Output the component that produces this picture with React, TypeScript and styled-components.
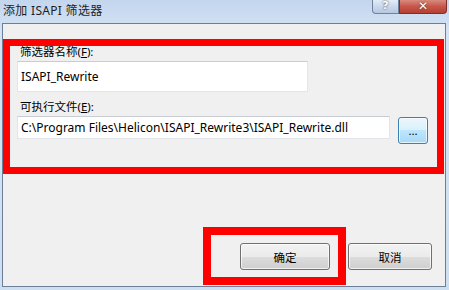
import React from "react";
import styled, { createGlobalStyle } from "styled-components";

const Global = createGlobalStyle`
  html, body { margin: 0; padding: 0; background: #cddcef; }
  body { font-family: "Noto Sans", "Noto Sans CJK SC", sans-serif; }
`;

const Window = styled.div`
  position: relative;
  width: 449px;
  height: 290px;
  background: linear-gradient(#c3d6ee, #d4e3f5 30px, #cfdff2);
  display: flex;
  flex-direction: column;
  overflow: hidden;
  font-family: "Noto Sans", "Noto Sans CJK SC", sans-serif;
`;

const TitleBar = styled.div`
  height: 23px;
  display: flex;
  justify-content: space-between;
  align-items: flex-start;
  padding: 0 2px 0 3px;
  flex-shrink: 0;
`;

const Title = styled.div`
  font-size: 12px;
  line-height: 13px;
  margin-top: 4px;
  color: #1e1e1e;
  letter-spacing: 0.3px;
`;

const Caption = styled.div`
  display: flex;
`;

const CapBtn = styled.div<{ $close?: boolean }>`
  width: ${(p) => (p.$close ? 48 : 27)}px;
  height: 14px;
  box-sizing: border-box;
  border: 1px solid ${(p) => (p.$close ? "#7d2f28" : "#6f839c")};
  border-top: none;
  border-radius: 0 0 ${(p) => (p.$close ? "4px 0" : "0 4px")};
  background: ${(p) =>
    p.$close
      ? "linear-gradient(#d98a7e, #c6574a 50%, #b63f31)"
      : "linear-gradient(#e3ecf7, #c9d8ec 50%, #b6c8e0)"};
  color: #fff;
  font-family: "DejaVu Sans", sans-serif;
  font-weight: bold;
  font-size: ${(p) => (p.$close ? 12 : 11)}px;
  line-height: 12px;
  text-align: center;
  text-shadow: 0 0 2px #333;
`;

const Panel = styled.div`
  flex: 1;
  margin: 0 3px 3px 2px;
  border: 1px solid #6d7f96;
  background: #f0f0f0;
  display: flex;
  flex-direction: column;
  padding: 20px 13px 16px 14px;
`;

const Label = styled.div`
  font-size: 11.5px;
  line-height: 16px;
  height: 16px;
  color: #000;
  padding-left: 3px;
  font-family: "Noto Sans", "Noto Sans CJK SC", sans-serif;
  & u { text-decoration: underline; }
`;

const TextBox = styled.div<{ $w: number; $h: number }>`
  width: ${(p) => p.$w}px;
  height: ${(p) => p.$h}px;
  box-sizing: border-box;
  background: #fff;
  border: 1px solid #e2e5ea;
  border-top-color: #c8ccd3;
  font-size: 12px;
  display: flex;
  align-items: center;
  padding: 0 0 1px 3px;
  color: #000;
  white-space: nowrap;
  font-family: "Noto Sans", sans-serif;
`;

const Row = styled.div`
  display: flex;
  align-items: flex-start;
  gap: 8px;
`;

const Btn = styled.div<{ $w: number; $hot?: boolean }>`
  width: ${(p) => p.$w}px;
  height: 27px;
  box-sizing: border-box;
  border: 1px solid ${(p) => (p.$hot ? "#3c7fb1" : "#707070")};
  border-radius: 3px;
  background: ${(p) =>
    p.$hot
      ? "linear-gradient(#eaf6fd, #d9f0fc 50%, #bee6fd 50%, #a7d9f5)"
      : "linear-gradient(#f2f2f2, #ebebeb 50%, #dddddd 50%, #cfcfcf)"};
  box-shadow: inset 0 0 0 1px rgba(255, 255, 255, 0.7);
  display: flex;
  align-items: center;
  justify-content: center;
  font-size: 11.5px;
  color: #000;
  font-family: "Noto Sans", "Noto Sans CJK SC", sans-serif;
`;

const Footer = styled.div`
  margin-top: auto;
  display: flex;
  justify-content: flex-end;
  gap: 18px;
`;

const Mark = styled.div`
  position: absolute;
  box-sizing: border-box;
  border: 7px solid #ff0000;
  pointer-events: none;
`;

export default function App() {
  return (
    <>
      <Global />
      <Window>
        <TitleBar>
          <Title>添加 ISAPI 筛选器</Title>
          <Caption>
            <CapBtn>?</CapBtn>
            <CapBtn $close>✕</CapBtn>
          </Caption>
        </TitleBar>
        <Panel>
          <Label>
            筛选器名称(<u>F</u>):
          </Label>
          <TextBox $w={291} $h={31} style={{ marginTop: 1 }}>
            ISAPI_Rewrite
          </TextBox>
          <Label style={{ marginTop: 7 }}>
            可执行文件(<u>E</u>):
          </Label>
          <Row style={{ marginTop: 1 }}>
            <TextBox $w={373} $h={23}>
              C:\Program Files\Helicon\ISAPI_Rewrite3\ISAPI_Rewrite.dll
            </TextBox>
            <Btn $w={30} $hot style={{ marginTop: 1 }}>
              ...
            </Btn>
          </Row>
          <Footer>
            <Btn $w={90}>确定</Btn>
            <Btn $w={84}>取消</Btn>
          </Footer>
        </Panel>
        <Mark style={{ left: 3, top: 39, width: 441, height: 135 }} />
        <Mark style={{ left: 203, top: 227, width: 143, height: 58, borderWidth: 8 }} />
      </Window>
    </>
  );
}
